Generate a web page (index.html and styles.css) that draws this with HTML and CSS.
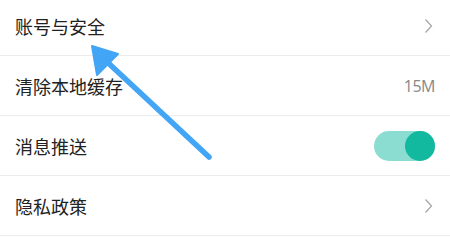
FILE: index.html
```html
<!DOCTYPE html>
<html lang="zh">
<head>
<meta charset="utf-8">
<link rel="stylesheet" href="styles.css">
</head>
<body>
<div class="page">
  <ul class="list">
    <li class="row"><span class="label">账号与安全</span>
      <svg class="chev" width="9" height="16" viewBox="0 0 9 16"><path d="M1.5 1.5 L7.5 8 L1.5 14.5" fill="none" stroke="#a8a8a8" stroke-width="1.3"/></svg>
    </li>
    <li class="row"><span class="label">清除本地缓存</span><span class="value">15M</span></li>
    <li class="row"><span class="label">消息推送</span>
      <span class="toggle"><span class="knob"></span></span>
    </li>
    <li class="row"><span class="label">隐私政策</span>
      <svg class="chev" width="9" height="16" viewBox="0 0 9 16"><path d="M1.5 1.5 L7.5 8 L1.5 14.5" fill="none" stroke="#a8a8a8" stroke-width="1.3"/></svg>
    </li>
  </ul>
  <svg class="arrow" width="450" height="241" viewBox="0 0 450 241">
    <line x1="104" y1="59" x2="209" y2="157" stroke="#42a5f5" stroke-width="5.5" stroke-linecap="round"/>
    <polygon points="92,46 118,54 97,75" fill="#42a5f5" stroke="#42a5f5" stroke-width="2" stroke-linejoin="round"/>
  </svg>
</div>
</body>
</html>
```
FILE: styles.css
```css
html, body {
  margin: 0;
  padding: 0;
  background: #fff;
}
.page {
  position: relative;
  width: 450px;
  height: 241px;
  overflow: hidden;
  font-family: "Noto Sans CJK SC", "Noto Sans", sans-serif;
}
.list {
  list-style: none;
  margin: -4px 0 0 0;
  padding: 0;
}
.row {
  height: 59px;
  border-bottom: 1px solid #ececec;
  display: flex;
  align-items: center;
  justify-content: space-between;
  padding: 0 15px;
}
.label {
  font-size: 18px;
  color: #222;
  line-height: 1;
  padding-top: 1px;
}
.value {
  font-family: "Open Sans", Roboto, sans-serif;
  font-size: 16px;
  color: #888;
  letter-spacing: -0.5px;
}
.chev {
  margin-right: 2px;
  display: block;
}
.toggle {
  width: 61px;
  height: 30px;
  border-radius: 15px;
  background: #8bddd1;
  display: flex;
  justify-content: flex-end;
  align-items: center;
  margin-top: 1px;
}
.knob {
  width: 30px;
  height: 30px;
  border-radius: 50%;
  background: #12b99f;
}
.arrow {
  position: absolute;
  left: 0;
  top: 0;
}
```
